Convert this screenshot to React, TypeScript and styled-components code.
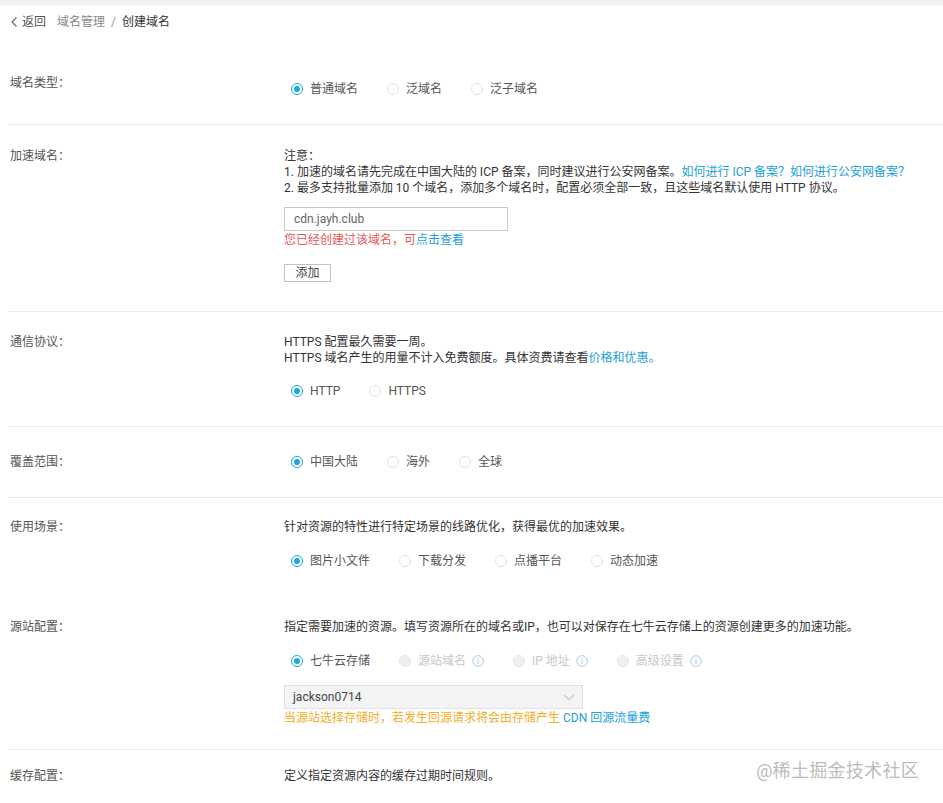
import React from 'react';
import styled, { createGlobalStyle } from 'styled-components';

const GlobalStyle = createGlobalStyle`
  html, body {
    margin: 0;
    padding: 0;
    background: #fff;
  }
  body {
    font-family: Roboto, "Noto Sans CJK SC", "Liberation Sans", sans-serif;
    font-size: 12px;
    color: #333;
  }
`;

const Page = styled.div`
  position: relative;
  width: 943px;
  min-height: 803px;
  overflow: hidden;
  background: #fff;
`;

const TopShade = styled.div`
  height: 6px;
  background: linear-gradient(#ededed, #f7f7f7);
`;

const Breadcrumb = styled.div`
  display: flex;
  align-items: center;
  height: 31px;
  padding-left: 9px;
  line-height: 16px;
  color: #999;
`;

const Back = styled.span`
  display: flex;
  align-items: center;
  gap: 2px;
  color: #555;
  margin-right: 11px;
`;

const Crumb = styled.span<{ $current?: boolean }>`
  color: ${(p) => (p.$current ? '#333' : '#888')};
`;

const Slash = styled.span`
  color: #999;
  margin: 0 6px;
`;

const Row = styled.div<{ $pt: number; $pb: number; $line?: boolean }>`
  display: flex;
  margin-left: 8px;
  padding: ${(p) => `${p.$pt}px 0 ${p.$pb}px 2px`};
  border-bottom: ${(p) => (p.$line ? '1px solid #ebebeb' : 'none')};
  line-height: 16px;
`;

const Label = styled.div`
  width: 274px;
  flex-shrink: 0;
  color: #555;
`;

const Content = styled.div`
  flex: 1;
  color: #333;
`;

const Line = styled.div`
  height: 16px;
  white-space: nowrap;
`;

const Link = styled.a`
  color: #1aa1d9;
  text-decoration: none;
`;

const RadioGroup = styled.div<{ $mt: number }>`
  display: flex;
  align-items: center;
  height: 16px;
  margin-top: ${(p) => p.$mt}px;
  padding-left: 7px;
`;

const RadioItem = styled.label<{ $disabled?: boolean }>`
  display: flex;
  align-items: center;
  margin-right: 29px;
  color: ${(p) => (p.$disabled ? '#c8c8c8' : '#555')};
  white-space: nowrap;
`;

const Circle = styled.span<{ $checked?: boolean; $disabled?: boolean }>`
  position: relative;
  box-sizing: border-box;
  width: 12px;
  height: 12px;
  border-radius: 50%;
  margin-right: 7px;
  border: 1px solid ${(p) => (p.$checked ? '#1aa8e0' : p.$disabled ? '#e6e6e6' : '#e2e2e2')};
  background: ${(p) => (p.$disabled ? '#efefef' : '#fff')};
  &::after {
    content: '';
    display: ${(p) => (p.$checked ? 'block' : 'none')};
    position: absolute;
    left: 2px;
    top: 2px;
    width: 6px;
    height: 6px;
    border-radius: 50%;
    background: #1aa8e0;
  }
`;

const Info = styled.span`
  display: inline-flex;
  margin-left: 6px;
`;

const TextInput = styled.div`
  box-sizing: border-box;
  width: 224px;
  height: 24px;
  margin-top: 11px;
  border: 1px solid #c8c8c8;
  padding-left: 9px;
  line-height: 22px;
  color: #666;
`;

const ErrorText = styled.div`
  height: 16px;
  margin-top: 1px;
  color: #e4585b;
`;

const Button = styled.button`
  display: block;
  box-sizing: border-box;
  width: 47px;
  height: 18px;
  margin-top: 16px;
  padding: 0;
  border: 1px solid #c2c2c2;
  background: #fff;
  font: inherit;
  line-height: 16px;
  color: #444;
`;

const Select = styled.div`
  box-sizing: border-box;
  display: flex;
  align-items: center;
  justify-content: space-between;
  width: 299px;
  height: 24px;
  margin-top: 16px;
  padding: 0 6px 0 8px;
  border: 1px solid #e0e0e0;
  background: #f4f4f4;
  color: #444;
`;

const Warning = styled.div`
  height: 16px;
  margin-top: 1px;
  color: #f5ad2a;
`;

const Watermark = styled.div`
  position: absolute;
  right: 24px;
  bottom: 22px;
  font-size: 18px;
  color: #bcbcbc;
  letter-spacing: 0.3px;
`;

const InfoIcon = () => (
  <svg width="12" height="12" viewBox="0 0 12 12">
    <circle cx="6" cy="6" r="5.3" fill="none" stroke="#a9cbe6" strokeWidth="1" />
    <circle cx="6" cy="3.6" r="0.7" fill="#a9cbe6" />
    <rect x="5.45" y="5" width="1.1" height="3.8" fill="#a9cbe6" />
  </svg>
);

type Opt = { text: string; checked?: boolean; disabled?: boolean; info?: boolean };

const Radios = ({ items, mt }: { items: Opt[]; mt: number }) => (
  <RadioGroup $mt={mt}>
    {items.map((o) => (
      <RadioItem key={o.text} $disabled={o.disabled}>
        <Circle $checked={o.checked} $disabled={o.disabled} />
        {o.text}
        {o.info && (
          <Info>
            <InfoIcon />
          </Info>
        )}
      </RadioItem>
    ))}
  </RadioGroup>
);

export default function App() {
  return (
    <Page>
      <GlobalStyle />
      <TopShade />
      <Breadcrumb>
        <Back>
          <svg width="11" height="12" viewBox="0 0 11 12">
            <path d="M7.5 1.5 L3 6 L7.5 10.5" fill="none" stroke="#666" strokeWidth="1.1" />
          </svg>
          返回
        </Back>
        <Crumb>域名管理</Crumb>
        <Slash>/</Slash>
        <Crumb $current>创建域名</Crumb>
      </Breadcrumb>

      <Row $pt={38} $pb={27} $line>
        <Label>域名类型：</Label>
        <Content>
          <Radios
            mt={6}
            items={[{ text: '普通域名', checked: true }, { text: '泛域名' }, { text: '泛子域名' }]}
          />
        </Content>
      </Row>

      <Row $pt={23} $pb={29} $line>
        <Label>加速域名：</Label>
        <Content>
          <Line>注意：</Line>
          <Line>
            1. 加速的域名请先完成在中国大陆的 ICP 备案，同时建议进行公安网备案。
            <Link>如何进行 ICP 备案？</Link>
            <Link>如何进行公安网备案？</Link>
          </Line>
          <Line>2. 最多支持批量添加 10 个域名，添加多个域名时，配置必须全部一致，且这些域名默认使用 HTTP 协议。</Line>
          <TextInput>cdn.jayh.club</TextInput>
          <ErrorText>
            您已经创建过该域名，可<Link>点击查看</Link>
          </ErrorText>
          <Button>添加</Button>
        </Content>
      </Row>

      <Row $pt={22} $pb={27} $line>
        <Label>通信协议：</Label>
        <Content>
          <Line>HTTPS 配置最久需要一周。</Line>
          <Line>
            HTTPS 域名产生的用量不计入免费额度。具体资费请查看<Link>价格和优惠。</Link>
          </Line>
          <Radios mt={17} items={[{ text: 'HTTP', checked: true }, { text: 'HTTPS' }]} />
        </Content>
      </Row>

      <Row $pt={27} $pb={27} $line>
        <Label>覆盖范围：</Label>
        <Content>
          <Radios mt={0} items={[{ text: '中国大陆', checked: true }, { text: '海外' }, { text: '全球' }]} />
        </Content>
      </Row>

      <Row $pt={21} $pb={24}>
        <Label>使用场景：</Label>
        <Content>
          <Line>针对资源的特性进行特定场景的线路优化，获得最优的加速效果。</Line>
          <Radios
            mt={18}
            items={[
              { text: '图片小文件', checked: true },
              { text: '下载分发' },
              { text: '点播平台' },
              { text: '动态加速' },
            ]}
          />
        </Content>
      </Row>

      <Row $pt={26} $pb={23} $line>
        <Label>源站配置：</Label>
        <Content>
          <Line>指定需要加速的资源。填写资源所在的域名或IP，也可以对保存在七牛云存储上的资源创建更多的加速功能。</Line>
          <Radios
            mt={18}
            items={[
              { text: '七牛云存储', checked: true },
              { text: '源站域名', disabled: true, info: true },
              { text: 'IP 地址', disabled: true, info: true },
              { text: '高级设置', disabled: true, info: true },
            ]}
          />
          <Select>
            jackson0714
            <svg width="14" height="10" viewBox="0 0 14 10">
              <path d="M2 3 L7 7.5 L12 3" fill="none" stroke="#c8c8c8" strokeWidth="1.1" />
            </svg>
          </Select>
          <Warning>
            当源站选择存储时，若发生回源请求将会由存储产生 <Link>CDN 回源流量费</Link>
          </Warning>
        </Content>
      </Row>

      <Row $pt={18} $pb={20}>
        <Label>缓存配置：</Label>
        <Content>
          <Line>定义指定资源内容的缓存过期时间规则。</Line>
        </Content>
      </Row>

      <Watermark>@稀土掘金技术社区</Watermark>
    </Page>
  );
}
